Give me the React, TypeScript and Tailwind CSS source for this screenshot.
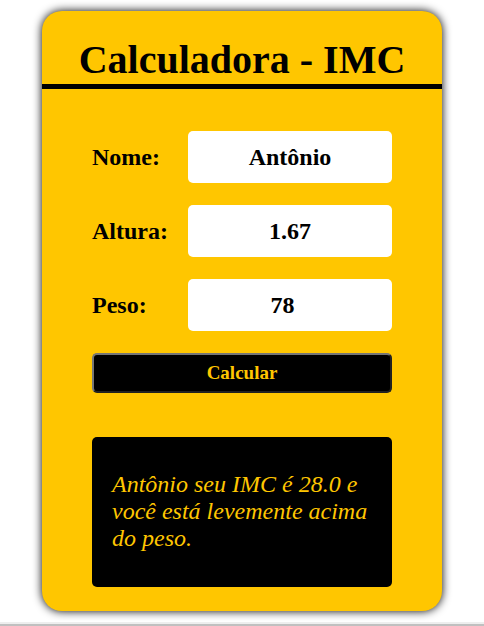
import { useState } from "react";
import type { FormEvent } from "react";

type FieldProps = {
  id: string;
  label: string;
  type?: "text" | "number";
  value: string;
  onChange: (value: string) => void;
};

function Field({ id, label, type = "text", value, onChange }: FieldProps) {
  return (
    <div className="flex items-center">
      <label htmlFor={id} className="w-24 shrink-0 text-2xl leading-7 font-bold">
        {label}
      </label>
      <input
        id={id}
        type={type}
        value={value}
        onChange={(e) => onChange(e.target.value)}
        className="h-[52px] min-w-0 flex-1 rounded-[5px] bg-white text-center text-2xl font-bold"
      />
    </div>
  );
}

export default function App() {
  const [nome, setNome] = useState("Antônio");
  const [altura, setAltura] = useState("1.67");
  const [peso, setPeso] = useState("78");
  const [resultado, setResultado] = useState(
    "Antônio seu IMC é 28.0 e você está levemente acima do peso.",
  );

  function calcular(e: FormEvent) {
    e.preventDefault();
    const imc = Number(peso) / (Number(altura) * Number(altura));
    let faixa = "com obesidade";
    if (imc < 18.5) faixa = "abaixo do peso";
    else if (imc < 25) faixa = "com peso ideal";
    else if (imc < 30) faixa = "levemente acima do peso";
    setResultado(`${nome} seu IMC é ${imc.toFixed(1)} e você está ${faixa}.`);
  }

  return (
    <div className="flex min-h-screen flex-col justify-between bg-white font-['Liberation_Serif',serif] text-black">
      <div className="px-4 py-[11px]">
        <main className="mx-auto max-w-[400px] rounded-[20px] bg-[#ffc600] pb-6 shadow-[0_0_10px_#000]">
          <h1 className="border-b-5 border-black pt-[25px] text-center text-[40px] leading-12 font-bold">
            Calculadora - IMC
          </h1>
          <form onSubmit={calcular} className="flex flex-col gap-[22px] px-[50px] pt-[42px]">
            <Field id="nome" label="Nome:" value={nome} onChange={setNome} />
            <Field id="altura" label="Altura:" value={altura} onChange={setAltura} />
            <Field id="peso" label="Peso:" type="number" value={peso} onChange={setPeso} />
            <button
              type="submit"
              className="h-10 rounded-[5px] border-2 border-t-[#767676] border-r-[#212121] border-b-[#212121] border-l-[#767676] bg-black text-[19px] leading-6 font-bold text-[#ffc600]"
            >
              Calcular
            </button>
          </form>
          <section className="mx-[50px] mt-11 flex min-h-[150px] items-center rounded-[5px] bg-black px-5 pb-0.5 text-2xl leading-[27px] text-[#ffc600] italic">
            <p>{resultado}</p>
          </section>
        </main>
      </div>
      <footer className="h-1 border-t-2 border-[#eeeeee] bg-[#c0c0c0]" />
    </div>
  );
}
